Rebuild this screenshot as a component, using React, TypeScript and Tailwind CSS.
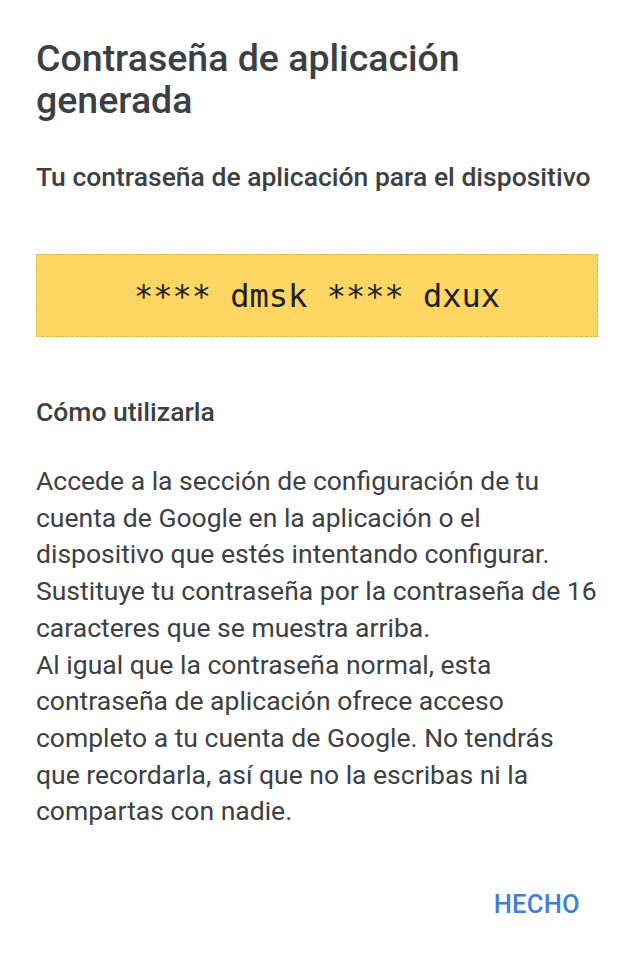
import React from 'react';

const App: React.FC = () => {
  return (
    <div className="min-h-screen w-[634px] bg-white font-['Roboto',sans-serif] text-[#3c4043]">
      <div className="px-[36px] pt-[37px]">
        {/* Title */}
        <h1 className="text-[37.5px] font-medium leading-[42px] text-[#3c4043]">
          Contraseña de aplicación
          <br />
          generada
        </h1>

        <p className="mt-[42px] text-[26.5px] font-medium leading-[28px]">
          Tu contraseña de aplicación para el dispositivo
        </p>

        {/* Password box */}
        <div className="mt-[63px] flex h-[83px] items-center justify-center border border-dashed border-[#d9b44a] bg-[#fdd663]">
          <span className="font-['DejaVu_Sans_Mono',monospace] text-[32px] text-[#202124]">
            **** dmsk **** dxux
          </span>
        </div>

        <h2 className="mt-[61px] text-[26.5px] font-medium leading-[28px]">Cómo utilizarla</h2>

        <p className="mt-[37px] text-[26.5px] leading-[36.7px]">
          Accede a la sección de configuración de tu
          <br />
          cuenta de Google en la aplicación o el
          <br />
          dispositivo que estés intentando configurar.
          <br />
          Sustituye tu contraseña por la contraseña de 16
          <br />
          caracteres que se muestra arriba.
          <br />
          Al igual que la contraseña normal, esta
          <br />
          contraseña de aplicación ofrece acceso
          <br />
          completo a tu cuenta de Google. No tendrás
          <br />
          que recordarla, así que no la escribas ni la
          <br />
          compartas con nadie.
        </p>

        {/* Actions */}
        <div className="mt-[58px] flex justify-end pr-[18px]">
          <button className="text-[25.5px] font-medium leading-[33px] tracking-[0.3px] text-[#3f7fdc]">
            HECHO
          </button>
        </div>
      </div>
    </div>
  );
};

export default App;
